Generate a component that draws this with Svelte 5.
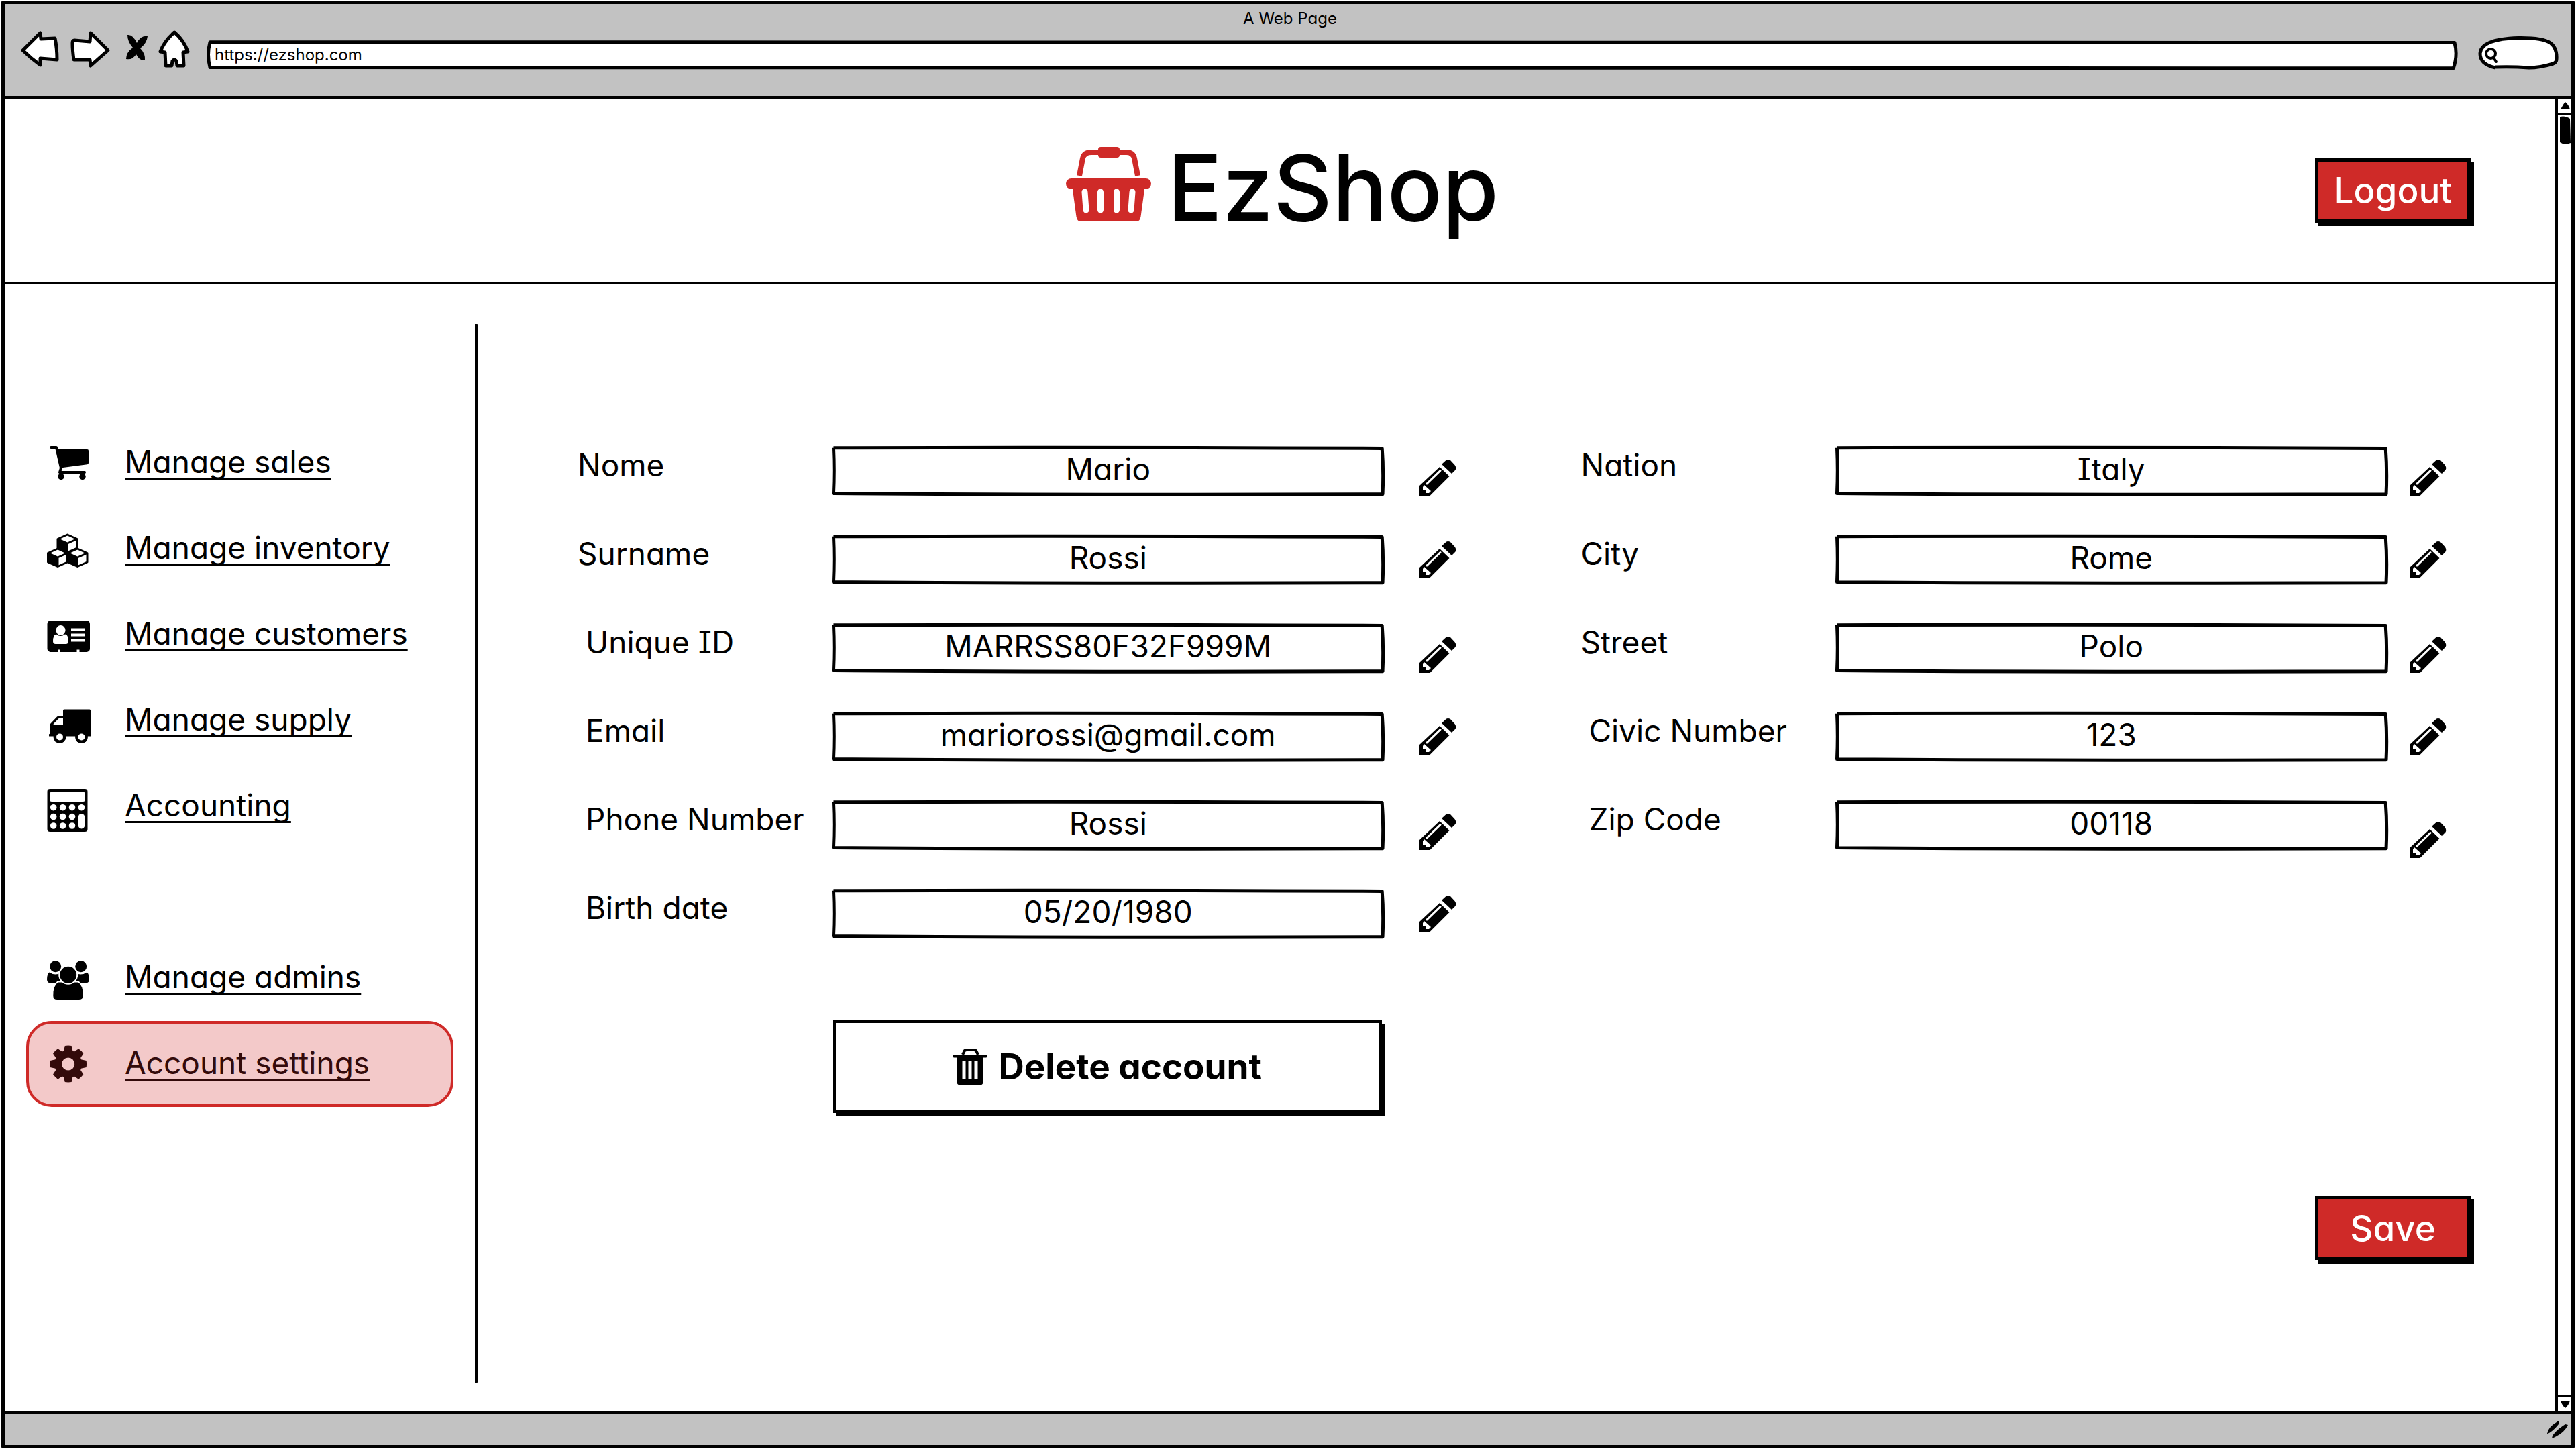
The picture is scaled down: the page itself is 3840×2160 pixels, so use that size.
<script>
  const mainLinks = [
    { icon: 'cart', text: 'Manage sales' },
    { icon: 'boxes', text: 'Manage inventory' },
    { icon: 'card', text: 'Manage customers' },
    { icon: 'truck', text: 'Manage supply' },
    { icon: 'calculator', text: 'Accounting' },
  ];
  const adminLinks = [
    { icon: 'group', text: 'Manage admins' },
    { icon: 'gear', text: 'Account settings', current: true },
  ];

  const personal = [
    { id: 'name', label: 'Nome', value: 'Mario', pencil: 'low' },
    { id: 'surname', label: 'Surname', value: 'Rossi' },
    { id: 'uid', label: 'Unique ID', value: 'MARRSS80F32F999M', pencil: 'low', indent: true },
    { id: 'email', label: 'Email', value: 'mariorossi@gmail.com', indent: true },
    { id: 'phone', label: 'Phone Number', value: 'Rossi', pencil: 'low', indent: true },
    { id: 'birth', label: 'Birth date', value: '05/20/1980', indent: true },
  ];
  const address = [
    { id: 'nation', label: 'Nation', value: 'Italy', pencil: 'low' },
    { id: 'city', label: 'City', value: 'Rome' },
    { id: 'street', label: 'Street', value: 'Polo', pencil: 'low' },
    { id: 'civic', label: 'Civic Number', value: '123', indent: true },
    { id: 'zip', label: 'Zip Code', value: '00118', pencil: 'below', indent: true },
  ];

  const teeth = [0, 45, 90, 135, 180, 225, 270, 315];
  const cubes = [[30.5, 24], [16, 45], [45.5, 45]];
  const keyRows = [33.7, 47.5, 61];
  const keyCols = [9.7, 23.6, 37.5];
</script>

{#snippet navIcon(name)}
  <svg class="nav-icon" viewBox="0 0 64 64" aria-hidden="true">
    {#if name === 'cart'}
      <path d="M13.5 12H60q2 0 2 2V32q0 2-2 2.300L20 39.500Z" />
      <path class="line" d="M6 9H14L21 39.500L19 46H56" />
      <circle cx="21" cy="52.500" r="4.700" /><circle cx="53" cy="52.500" r="4.700" />
    {:else if name === 'boxes'}
      {#each cubes as [x, y]}
        <g transform="translate({x} {y})">
          <path class="paper" d="M0-13L14.500-6.500V7L0 13.500L-14.500 7V-6.500Z" />
          <path d="M-14.500-6.500L0 0V13.500L-14.500 7Z" />
          <path class="thin" d="M-14.500-6.500L0 0L14.500-6.500M0 0V13.500" />
        </g>
      {/each}
    {:else if name === 'card'}
      <rect x="0.500" y="11" width="63.500" height="47" rx="5" />
      <path class="white" d="M9 42q0-10 5-10.500q6 5 13 0q5 .5 5 10.500q0 4-4 4H13q-4 0-4-4Z" />
      <ellipse class="white" cx="20.500" cy="25.500" rx="7" ry="7.500" />
      <path class="white" d="M36 22.500H56V26.500H36ZM36 30.500H56V34.500H36ZM36 38.500H56V42.500H36ZM16 54.500H20V58H16ZM44.500 54.500H48.500V58H44.500Z" />
    {:else if name === 'truck'}
      <path d="M24 17q0-1.500 1.500-1.500H63.500q1.500 0 1.500 1.500V55.500H3V52.500L5 51V37L15 26.500q1.500-1.500 3.500-1.500H24Z" />
      <path class="white" d="M9.700 38V37L17 29.500q1-1 2.500-1H24V38Z" />
      <circle cx="19" cy="56.500" r="9.500" /><circle cx="51.500" cy="56.500" r="9.500" />
      <circle class="white" cx="19" cy="56.500" r="5" /><circle class="white" cx="51.500" cy="56.500" r="5" />
    {:else if name === 'calculator'}
      <rect x="0.500" y="6" width="60" height="64" rx="4" />
      <rect class="white" x="4.500" y="10.500" width="52" height="14.500" rx="2.500" />
      {#each keyRows as y}
        {#each keyCols as x}
          <circle class="white" cx={x} cy={y} r="4.800" />
        {/each}
      {/each}
      <circle class="white" cx="51.500" cy="33.700" r="4.800" />
      <rect class="white" x="46.800" y="43" width="9.400" height="22.500" rx="4.700" />
    {:else if name === 'group'}
      <circle cx="12.700" cy="14.700" r="8.500" /><circle cx="50.700" cy="14.700" r="8.500" />
      <path d="M3.500 23.500q4.500 3 9.200 3t7-2V38q-8 2-14.700 1.500Q0 39 0 34q0-8 3.500-10.500Z" />
      <path d="M59.500 23.500q-4.500 3-9.200 3t-7-2V38q8 2 14.700 1.500Q63 39 63 34q0-8-3.500-10.500Z" />
      <path class="cut" d="M16 37.500h31q8 5 7.700 21q0 6.500-7 6.500H15.300q-7 0-7-6.500Q8 43 16 37.500Z" />
      <circle class="cut" cx="31.700" cy="27.300" r="13.500" />
    {:else}
      <circle class="hub" cx="31.700" cy="32" r="15" />
      {#each teeth as angle}
        <path d="M25 13L26.700 5Q31.700 4.200 36.700 5L38.500 13Z" transform="rotate({angle} 31.700 32)" />
      {/each}
    {/if}
  </svg>
{/snippet}

{#snippet navItem(link)}
  <li>
    <a href="#top" class="nav-link" class:current={link.current} aria-current={link.current ? 'page' : undefined}>
      {@render navIcon(link.icon)}
      <span class="nav-text">{link.text}</span>
    </a>
  </li>
{/snippet}

{#snippet fieldRow(f)}
  <div class="row">
    <label for={f.id} class:indent={f.indent}>{f.label}</label>
    <div class="field">
      <svg class="sketch" viewBox="0 0 100 100" preserveAspectRatio="none" aria-hidden="true">
        <path d="M0.300 5Q50 3 99.600 6Q99.900 50 99.700 97Q50 99 0.300 95.500Q.5 50 .3 5" />
      </svg>
      <input id={f.id} type="text" value={f.value} />
    </div>
    <button type="button" class="pencil {f.pencil ?? ''}" aria-label="Edit {f.label}">
      <svg viewBox="0 0 54 54" aria-hidden="true">
        <path d="M0 39L30 11L44.500 25L15.500 54H0ZM33 7L39 1.500Q42-1 46 1L52.500 8Q55.500 12 53.500 15.500L48 21Z" />
        <path class="white" d="M7 38L17 47L14 50H9V46H5V41Z" />
        <path class="shine" d="M11 36L31 16.500" />
      </svg>
    </button>
  </div>
{/snippet}

<div class="browser" id="top">
  <div class="chrome">
    <div class="title">A Web Page</div>
    <div class="tools">
      <button type="button" class="tool" aria-label="Back">
        <svg width="56" height="60" viewBox="32 44 56 60"><path class="outline" d="M34 75L60 49L61 58L82 57Q85 72 85 89L60 87V97Q46 87 34 75Z" /></svg>
      </button>
      <button type="button" class="tool forward" aria-label="Forward">
        <svg width="60" height="60" viewBox="104 44 60 60"><path class="outline" d="M111 60L134 62L135 49L161 75L135 98L134 89L110 89Q108 75 108 64Q108 60 111 60Z" /></svg>
      </button>
      <button type="button" class="tool stop" aria-label="Stop">
        <svg width="34" height="60" viewBox="187 44 34 60"><path d="M190 52Q198 51 204 64Q210 52 220 54Q219 64 209 72Q217 80 216 90Q208 91 203 81Q197 90 188 88Q188 78 198 71Q190 62 190 52Z" /></svg>
      </button>
      <button type="button" class="tool home" aria-label="Home">
        <svg width="48" height="60" viewBox="236 44 48 60"><path class="outline" d="M260 48Q274 60 280 77L273 78L274 98H264L263 91Q260 87 257 91L256 98H247L246 78L239 77Q245 61 260 48Z" /></svg>
      </button>
      <div class="address">
        <svg class="sketch" viewBox="0 0 100 100" preserveAspectRatio="none" aria-hidden="true">
          <path d="M.15 6L99.850 8Q100 50 99.800 95L.15 92Q0 50 .15 6Z" />
        </svg>
        <input type="text" aria-label="Address" value="https://ezshop.com" />
      </div>
      <div class="search">
        <svg viewBox="0 0 120 50" aria-hidden="true">
          <path class="outline" d="M26 47Q3 42 3 26Q4 4 60 2.500Q96 2 108 10Q118 18 117 34Q117 39 112 41Q92 47 76 47Q50 45 26 46" />
          <circle class="lens" cx="19" cy="26" r="7" /><path class="lens" d="M23 32L27 38" />
        </svg>
        <input type="search" aria-label="Search" />
      </div>
    </div>
  </div>

  <div class="viewport">
    <div class="page">
      <header>
        <a href="#top" class="logo">
          <svg viewBox="0 0 127 111" aria-hidden="true">
            <path class="handle" d="M20 43L25 17Q27 8 38 8H90Q100 8 102 17L107 43" />
            <rect x="48" y="0" width="32" height="16" rx="4" />
            <rect x="0" y="47" width="127" height="16" rx="8" />
            <path d="M9.500 60H117.500L111.500 104Q110 111 106 111H21Q17 111 15.500 104Z" />
            <path class="slot" d="M28 67L30 94M51.500 67V94M75.500 67V94M99 67L97 94" />
          </svg>
          <span>EzShop</span>
        </a>
        <button type="button" class="action logout">Logout</button>
      </header>

      <div class="body">
        <nav>
          <ul>
            {#each mainLinks as link}{@render navItem(link)}{/each}
          </ul>
          <ul class="second">
            {#each adminLinks as link}{@render navItem(link)}{/each}
          </ul>
        </nav>
        <form onsubmit={(e) => e.preventDefault()}>
          <div class="groups">
            <div class="group">
              {#each personal as f}{@render fieldRow(f)}{/each}
              <div class="row delete-row">
                <button type="button" class="delete">
                  <svg viewBox="0 0 50 55" aria-hidden="true">
                    <path class="lid" d="M14 9L17 3Q18 2 20 2H31Q33 2 34 3L37 9" />
                    <rect x="0" y="9" width="50" height="4.500" rx="1" />
                    <path d="M5 12H45V48Q45 55 39 55H11Q5 55 5 48Z" />
                    <path class="white" d="M13.500 18H18.500V46H13.500ZM22.500 18H27.500V46H22.500ZM31.500 18H36.500V46H31.500Z" />
                  </svg>
                  <span>Delete account</span>
                </button>
              </div>
            </div>
            <div class="group right">
              {#each address as f}{@render fieldRow(f)}{/each}
            </div>
          </div>
          <button type="submit" class="action save">Save</button>
        </form>
      </div>
    </div>
    <div class="scrollbar" aria-hidden="true">
      <svg class="up" viewBox="0 0 22 20"><path d="M4 15Q8 7 11 4Q16 8 18 15Z" /></svg>
      <svg class="thumb" viewBox="0 0 22 46"><path d="M3 3Q11 1 18 6L19 42Q10 46 3 41Z" /></svg>
      <svg class="down" viewBox="0 0 22 20"><path d="M4 5H18Q16 12 11 16Q6 12 4 5Z" /></svg>
    </div>
  </div>

  <footer>
    <svg viewBox="0 0 34 28" aria-hidden="true">
      <path d="M1 20Q2 10 18 1Q20 2 18 6Q10 16 2 20ZM8 27Q8 19 28 6L32 7Q26 20 8 27Z" />
    </svg>
  </footer>
</div>

<style>
  :global(body) {
    background: #fff;
  }

  .browser,
  .browser * {
    box-sizing: border-box;
  }

  .browser {
    display: flex;
    flex-direction: column;
    min-height: calc(100vh - 2px);
    margin: 1px 2px;
    border: 5px solid #000;
    border-radius: 2px;
    background: #fff;
    color: #000;
    font-family: Inter, 'Open Sans', sans-serif;
    font-feature-settings: 'cv11', 'cv08';
    font-size: 46px;
    line-height: 56px;
  }

  button,
  input {
    margin: 0;
    padding: 0;
    border: 0;
    background: none;
    color: inherit;
    font: inherit;
    font-feature-settings: inherit;
  }

  button {
    cursor: pointer;
  }

  svg {
    display: block;
    overflow: visible;
    flex: none;
  }

  .white {
    fill: #fff;
  }

  .outline {
    fill: #fff;
    stroke: #000;
    stroke-width: 5px;
    stroke-linejoin: round;
  }

  .sketch {
    position: absolute;
    inset: 0;
    width: 100%;
    height: 100%;
  }

  .sketch path {
    fill: #fff;
    stroke: #000;
    stroke-width: 5px;
    stroke-linejoin: round;
    vector-effect: non-scaling-stroke;
  }

  /* Browser chrome */
  .chrome {
    height: 142px;
    padding: 6px 19px 0 25px;
    border-bottom: 5px solid #000;
    background: #c2c2c2;
  }

  .title {
    font-size: 24px;
    line-height: 32px;
    text-align: center;
  }

  .tools {
    display: flex;
    align-items: flex-end;
  }

  .forward {
    margin-left: 16px;
  }

  .stop {
    margin-left: 23px;
  }

  .home {
    margin-left: 15px;
  }

  .address {
    position: relative;
    flex: 1;
    height: 44px;
    margin-left: 24px;
  }

  .address input {
    position: relative;
    display: block;
    width: 100%;
    height: 42px;
    padding: 0 12px;
    font-size: 24px;
    line-height: 32px;
    outline: none;
  }

  .search {
    position: relative;
    width: 120px;
    height: 50px;
    margin-left: 30px;
  }

  .search input {
    position: absolute;
    inset: 0 12px 0 34px;
    width: 72px;
    font-size: 24px;
    line-height: 32px;
    outline: none;
    appearance: none;
  }

  .lens {
    fill: none;
    stroke: #000;
    stroke-width: 4px;
    stroke-linecap: round;
  }

  /* Page area and scrollbar */
  .viewport {
    display: flex;
    flex: 1;
  }

  .page {
    display: flex;
    flex: 1;
    flex-direction: column;
    min-width: 0;
  }

  .scrollbar {
    display: flex;
    flex-direction: column;
    width: 24px;
    margin-right: 0;
    border-left: 4px solid #000;
  }

  .up,
  .down {
    width: 22px;
    height: 20px;
  }

  .up {
    height: 23px;
    border-bottom: 3px solid #000;
  }

  .thumb {
    width: 22px;
    height: 46px;
  }

  .down {
    height: 23px;
    margin-top: auto;
    border-top: 3px solid #000;
  }

  header {
    display: grid;
    grid-template-columns: 1fr auto 1fr;
    align-items: center;
    height: 276px;
    padding-right: 126px;
    padding-left: 133px;
    border-bottom: 4px solid #000;
  }

  .logo {
    display: flex;
    grid-column: 2;
    align-items: center;
    gap: 24px;
    padding-bottom: 8px;
    color: #000;
    font-size: 136px;
    font-weight: 500;
    line-height: 160px;
    text-decoration: none;
  }

  .logo svg {
    width: 127px;
    height: 111px;
    margin-bottom: 12px;
    fill: #cf2a28;
  }

  .handle {
    fill: none;
    stroke: #cf2a28;
    stroke-width: 8px;
  }

  .slot {
    stroke: #fff;
    stroke-width: 9px;
    stroke-linecap: round;
  }

  .action {
    width: 232px;
    height: 96px;
    border: 5px solid #000;
    background: #cf2a28;
    box-shadow: 5px 5px 0 #000;
    color: #fff;
    font-size: 53px;
    font-weight: 500;
  }

  .logout {
    justify-self: end;
  }

  .body {
    display: flex;
    flex: 1;
  }

  /* Sidebar */
  nav {
    width: 706px;
    margin: 59px 0 42px;
    padding: 143px 32px 0 32px;
    border-right: 5px solid #000;
    border-radius: 2px;
  }

  ul {
    margin: 0;
    padding: 0;
    list-style: none;
  }

  .second {
    margin-top: 128px;
  }

  .nav-link {
    display: flex;
    align-items: center;
    gap: 52px;
    height: 128px;
    padding-left: 27px;
    border: 4px solid transparent;
    color: #000;
    text-decoration: none;
  }

  .nav-text {
    padding-bottom: 4px;
    text-decoration: underline;
    text-decoration-skip-ink: none;
    text-decoration-thickness: 3px;
    text-underline-offset: 7px;
  }

  .current {
    border-color: #cf2a28;
    border-radius: 38px;
    background: #f3c9c9;
    color: #330a0a;
  }

  .nav-icon {
    width: 64px;
    height: 64px;
    fill: currentColor;
  }

  .line {
    fill: none;
    stroke: #000;
    stroke-width: 4px;
    stroke-linecap: round;
    stroke-linejoin: round;
  }

  .paper,
  .thin {
    fill: #fff;
    stroke: #000;
    stroke-width: 3px;
    stroke-linejoin: round;
  }

  .thin {
    fill: none;
  }

  .cut {
    stroke: #fff;
    stroke-width: 2px;
  }

  .hub {
    fill: none;
    stroke: currentColor;
    stroke-width: 11px;
  }

  /* Account form */
  form {
    display: flex;
    flex: 1;
    flex-direction: column;
    min-width: 0;
    padding: 240px 126px 0 148px;
  }

  .groups {
    display: flex;
    gap: 187px;
    padding-right: 37px;
  }

  .group {
    display: flex;
    flex: 1 1 auto;
    flex-direction: column;
    gap: 57px;
  }

  .row {
    display: grid;
    grid-template-columns: 379px minmax(0, 1fr) 106px;
    align-items: center;
    height: 75px;
  }

  .right .row {
    grid-template-columns: 379px minmax(0, 1fr) 87px;
  }

  label {
    padding-bottom: 18px;
    white-space: nowrap;
  }

  .indent {
    padding-left: 12px;
  }

  .field {
    position: relative;
    height: 75px;
  }

  .field input {
    position: relative;
    display: block;
    width: 100%;
    height: 75px;
    padding-bottom: 6px;
    text-align: center;
    outline: none;
  }

  .pencil {
    justify-self: end;
    width: 54px;
    height: 55px;
  }

  .low {
    align-self: end;
  }

  .below {
    align-self: end;
    margin-bottom: -12px;
  }

  .shine {
    stroke: #fff;
    stroke-width: 3px;
    stroke-linecap: round;
  }

  .delete-row {
    height: auto;
    margin-top: 65px;
  }

  .delete {
    display: flex;
    grid-column: 2;
    align-items: center;
    justify-content: center;
    gap: 18px;
    height: 138px;
    margin: 0 4px 0 2px;
    border: 4px solid #000;
    box-shadow: 4px 5px 0 #000;
    font-size: 53px;
    font-weight: 700;
  }

  .delete svg {
    width: 50px;
    height: 55px;
  }

  .lid {
    fill: none;
    stroke: #000;
    stroke-width: 4px;
  }

  .save {
    align-self: flex-end;
    margin-top: 124px;
  }

  footer {
    display: flex;
    align-items: center;
    justify-content: flex-end;
    height: 51px;
    padding-right: 3px;
    border-top: 5px solid #000;
    background: #c2c2c2;
  }

  footer svg {
    width: 34px;
    height: 28px;
  }
</style>
